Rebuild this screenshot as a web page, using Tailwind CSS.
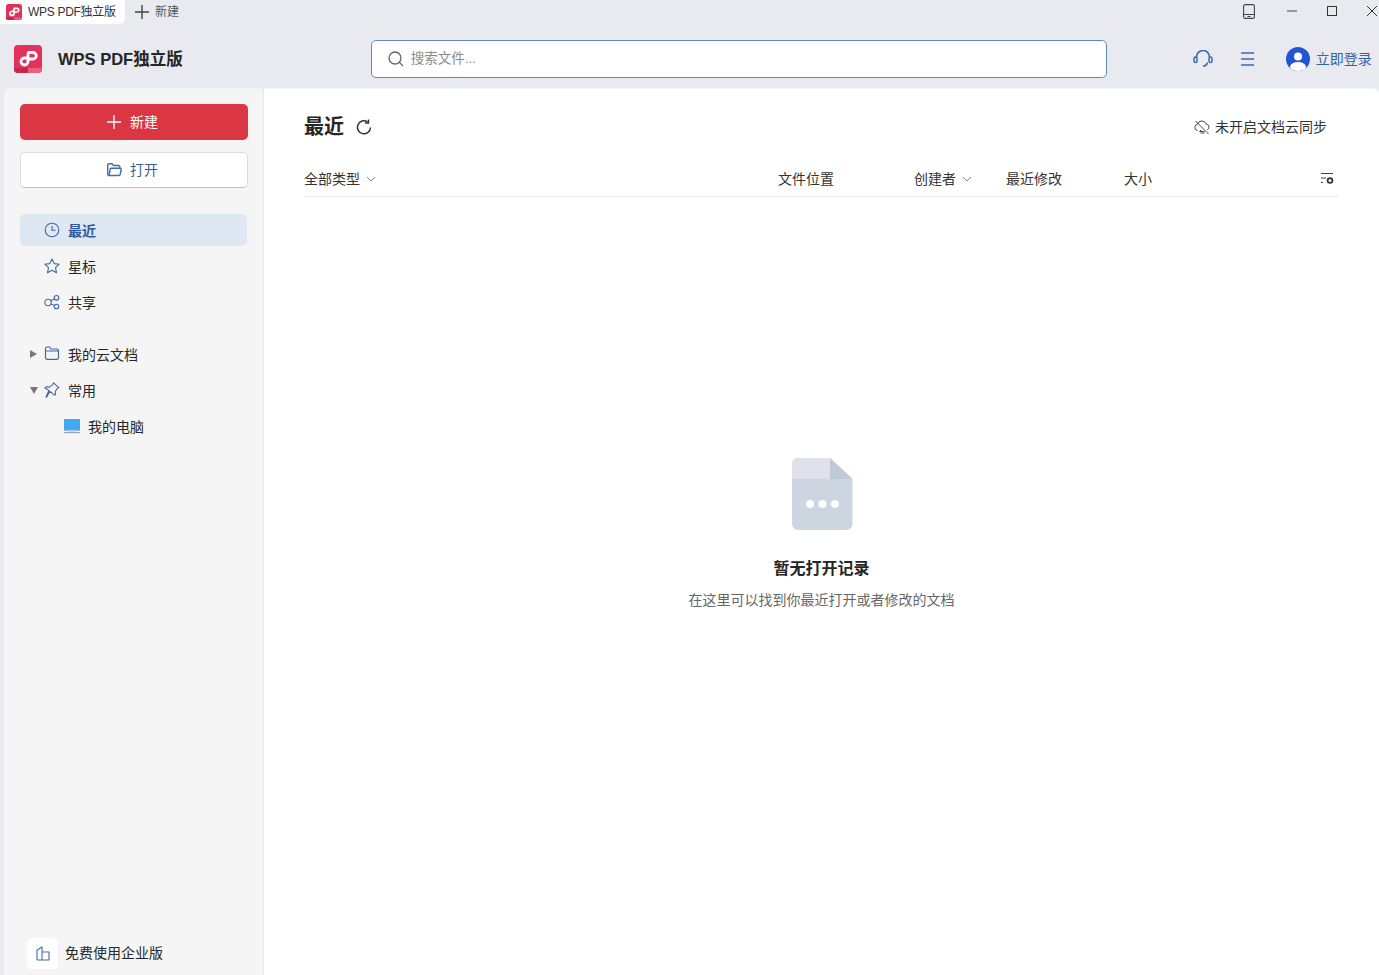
<!DOCTYPE html>
<html lang="zh-CN">
  <head>
    <meta charset="UTF-8" />
    <title>WPS PDF独立版</title>
    <script src="https://cdn.jsdelivr.net/npm/@tailwindcss/browser@4"></script>
  </head>
  <body class="bg-[#e9eaef] overflow-hidden font-['Liberation_Sans','Noto_Sans_CJK_SC',sans-serif] text-[#262626]">
    <div class="h-[975px] w-[1379px] flex flex-col overflow-hidden">
      <!-- title bar -->
      <div class="h-[26px] flex items-start shrink-0">
        <div class="h-[26px] w-[125px] bg-white rounded-br-md flex items-center pl-[6px] gap-[6px] -mt-[2px] pt-[2px]">
          <svg width="16" height="16" viewBox="0 0 28 28"><rect width="28" height="28" rx="4" fill="#e0325a"/><path d="M0 23h14v5H4a4 4 0 0 1-4-4z" fill="#c4264c"/><path d="M14 23h14v1a4 4 0 0 1-4 4H14z" fill="#ea5f7e"/><path d="M14.500 7.500h4.500a3.200 3.200 0 0 1 0 6.500H14v-4.500a2.500 2.500 0 0 1 .5-2zM14 14v2.500a3.500 3.500 0 1 1-3.500-3.500H14" fill="none" stroke="#fff" stroke-width="3"/></svg>
          <span class="text-[12px] tracking-[-0.3px] text-[#333]">WPS PDF独立版</span>
        </div>
        <div class="flex items-center h-[24px] ml-[10px] gap-[6px]">
          <svg width="14" height="14" viewBox="0 0 14 14"><path d="M7 0v14M0 7h14" stroke="#444" stroke-width="1.400"/></svg>
          <span class="text-[12px] text-[#555]">新建</span>
        </div>
        <div class="ml-auto flex items-center h-[22px]">
          <svg class="mr-[32px]" width="12" height="15" viewBox="0 0 12 15" fill="none"><rect x=".6" y=".6" width="10.800" height="13.800" rx="1.500" stroke="#444" stroke-width="1.100"/><path d="M.6 10.500h10.800M4.500 12.500h3" stroke="#444"/></svg>
          <svg class="mr-[30px]" width="10" height="10" viewBox="0 0 10 10"><path d="M0 5h10" stroke="#444"/></svg>
          <svg class="mr-[30px]" width="10" height="10" viewBox="0 0 10 10" fill="none"><rect x=".5" y=".5" width="9" height="9" stroke="#333"/></svg>
          <svg class="mr-[2px]" width="10" height="10" viewBox="0 0 10 10"><path d="M0 0l10 10M10 0L0 10" stroke="#333"/></svg>
        </div>
      </div>
      <!-- header -->
      <div class="h-[62px] flex items-center shrink-0 relative">
        <svg class="ml-[14px] mt-[4px]" width="28" height="28" viewBox="0 0 28 28"><rect width="28" height="28" rx="4" fill="#e0325a"/><path d="M0 23h14v5H4a4 4 0 0 1-4-4z" fill="#c4264c"/><path d="M14 23h14v1a4 4 0 0 1-4 4H14z" fill="#ea5f7e"/><path d="M14.500 7.500h4.500a3.200 3.200 0 0 1 0 6.500H14v-4.500a2.500 2.500 0 0 1 .5-2zM14 14v2.500a3.500 3.500 0 1 1-3.500-3.500H14" fill="none" stroke="#fff" stroke-width="2.800"/></svg>
        <span class="ml-[16px] mt-[4px] text-[16.500px] font-bold text-[#262626]">WPS PDF独立版</span>
        <div class="ml-[188px] mt-[4px] w-[736px] h-[38px] bg-white border border-[#5f8bbd] rounded-[5px] flex items-center pl-[16px] gap-[7px]">
          <svg width="16" height="16" viewBox="0 0 16 16" fill="none"><circle cx="7" cy="7" r="6" stroke="#666" stroke-width="1.300"/><path d="M11.500 11.500L15 15" stroke="#666" stroke-width="1.300"/></svg>
          <span class="text-[13.500px] text-[#8a8a8a]">搜索文件...</span>
        </div>
        <svg class="ml-[86px] mt-[4px]" width="20" height="18" viewBox="0 0 20 18" fill="none"><path d="M3.500 7.500V7a6.500 6.500 0 0 1 13 0v.5" stroke="#3a69b0" stroke-width="1.600"/><path d="M14.500 12.500c-.5 2.500-2 3.500-4.500 3.500" stroke="#3a69b0" stroke-width="1.600"/><rect x="1" y="7" width="3" height="5.500" rx="1.500" stroke="#3a69b0" stroke-width="1.500"/><rect x="16" y="7" width="3" height="5.500" rx="1.500" stroke="#3a69b0" stroke-width="1.500"/></svg>
        <svg class="ml-[28px] mt-[4px]" width="13" height="14" viewBox="0 0 13 14"><path d="M0 1h13M0 7h13M0 13h13" stroke="#3a69b0" stroke-width="1.500"/></svg>
        <svg class="ml-[32px] mt-[4px]" width="24" height="24" viewBox="0 0 24 24"><defs><clipPath id="avatar"><circle cx="12" cy="12" r="12"/></clipPath></defs><circle cx="12" cy="12" r="12" fill="#1f55d6"/><g clip-path="url(#avatar)"><circle cx="12" cy="9.500" r="4" fill="#fff"/><ellipse cx="12" cy="20" rx="8" ry="5" fill="#fff"/></g></svg>
        <span class="ml-[6px] mt-[4px] text-[14px] text-[#2f62ae]">立即登录</span>
      </div>
      <!-- body -->
      <div class="flex-1 flex min-h-0 pl-[4px]">
        <aside class="w-[260px] shrink-0 bg-[#f5f5f6] rounded-tl-md border-t border-r border-r-[#e8e8ea] border-t-[#f1f1f3] flex flex-col pl-[16px] pr-[15px] pt-[15px] pb-[6px]">
          <div class="h-[36px] bg-[#da3644] rounded-[5px] flex items-center justify-center gap-[9px] pr-[3px] text-white">
            <svg width="14" height="14" viewBox="0 0 14 14"><path d="M7 0v14M0 7h14" stroke="#fff" stroke-width="1.300"/></svg>
            <span class="text-[14px]">新建</span>
          </div>
          <div class="mt-[12px] h-[36px] bg-white border border-[#dcdcdc] border-b-[#bdbdbd] rounded-[5px] flex items-center justify-center gap-[8px] pr-[3px]">
            <svg width="15" height="14" viewBox="0 0 15 14" fill="none" stroke="#3f6fa8" stroke-width="1.400"><path d="M2 12.500a1.300 1.300 0 0 1-1.300-1.300V2a1.300 1.300 0 0 1 1.300-1.300h3l1.500 1.800h5a1.300 1.300 0 0 1 1.300 1.300v1.400"/><path d="M2 12.500l1.200-6.500a1 1 0 0 1 1-.7h9a1 1 0 0 1 1 1.200l-1 4.800a1.500 1.500 0 0 1-1.500 1.200H2z"/></svg>
            <span class="text-[14px] text-[#3a5f8f]">打开</span>
          </div>
          <nav class="mt-[26px] flex flex-col w-[227px]">
            <div class="h-[32px] bg-[#dfe7f3] rounded-[5px] flex items-center pl-[24px] gap-[8px]">
              <svg width="16" height="16" viewBox="0 0 16 16" fill="none" stroke="#45689b" stroke-width="1.100"><circle cx="8" cy="8" r="6.800"/><path d="M8 4v4.300h3.500"/></svg>
              <span class="text-[14px] font-bold text-[#2f5a9c] mt-[2px]">最近</span>
            </div>
            <div class="mt-[4px] h-[32px] flex items-center pl-[24px] gap-[8px]">
              <svg width="16" height="16" viewBox="0 0 16 16" fill="none" stroke="#45689b" stroke-width="1.100"><path d="M8 .9l2.200 4.700 5 .6-3.700 3.500 1 5.100L8 12.300l-4.500 2.500 1-5.100L.8 6.200l5-.6z" stroke-linejoin="round"/></svg>
              <span class="text-[14px] mt-[2px]">星标</span>
            </div>
            <div class="mt-[4px] h-[32px] flex items-center pl-[24px] gap-[8px]">
              <svg width="16" height="16" viewBox="0 0 16 16" fill="none" stroke="#45689b" stroke-width="1.100"><circle cx="4" cy="8.500" r="3.200"/><circle cx="12.500" cy="3.800" r="2.300"/><circle cx="12.500" cy="12.500" r="2.300"/><path d="M6.800 7l3.700-2.200M6.800 10l3.700 1.500"/></svg>
              <span class="text-[14px] mt-[2px]">共享</span>
            </div>
            <div class="mt-[20px] h-[32px] flex items-center relative pl-[24px] gap-[8px]">
              <span class="absolute left-[10px] top-[12px] w-0 h-0 border-y-[4px] border-y-transparent border-l-[7px] border-l-[#777]"></span>
              <svg class="-mt-[2px]" width="16" height="14" viewBox="0 0 16 14" fill="none" stroke="#45689b" stroke-width="1.200"><path d="M1.500 4.500V2.500A1.500 1.500 0 0 1 3 1h2.500L7 3h6A1.800 1.800 0 0 1 14.500 4.800v6.700a1.800 1.800 0 0 1-1.800 1.800H3.300a1.800 1.800 0 0 1-1.800-1.800zM1.500 5h13"/></svg>
              <span class="text-[14px] mt-[2px]">我的云文档</span>
            </div>
            <div class="mt-[4px] h-[32px] flex items-center relative pl-[24px] gap-[8px]">
              <span class="absolute left-[10px] top-[13px] w-0 h-0 border-x-[4px] border-x-transparent border-t-[7px] border-t-[#777]"></span>
              <svg width="16" height="16" viewBox="0 0 16 16" fill="none" stroke="#45689b" stroke-width="1.100"><path d="M9.500 .8l5.500 5-1.700.5-2 3.200.2 3-1 .7L6 9.300 2.500 15.200 2 14.800 5 8.500 1 6l1.500-1.200 3 .3 3.200-2.500z" stroke-linejoin="round"/></svg>
              <span class="text-[14px] mt-[2px]">常用</span>
            </div>
            <div class="mt-[4px] h-[32px] flex items-center pl-[44px] gap-[8px]">
              <svg width="16" height="15" viewBox="0 0 16 15"><rect width="16" height="10.500" fill="#41a9ee"/><rect y="10.500" width="16" height="1" fill="#2b80c9"/><rect y="13" width="16" height="1.200" fill="#9aa9b8"/><rect x="5" y="11.500" width="6" height="1.500" fill="#cfd6dd"/></svg>
              <span class="text-[14px] mt-[2px]">我的电脑</span>
            </div>
          </nav>
          <div class="mt-auto flex items-center gap-[7px] pl-[7px]">
            <div class="w-[31px] h-[31px] bg-white rounded-[5px] flex items-center justify-center">
              <svg width="14" height="15" viewBox="0 0 14 15" fill="none" stroke="#3f6fa8" stroke-width="1.100"><path d="M1 14V4l5-3v13M6 6h7v8H1M1 14h12"/></svg>
            </div>
            <span class="text-[14px]">免费使用企业版</span>
          </div>
        </aside>
        <main class="flex-1 bg-white rounded-tr-md border-t border-[#f4f4f6] pt-[23px] pl-[40px] pr-[40px] flex flex-col relative">
          <div class="h-[30px] flex items-center">
            <h1 class="text-[20px] font-bold text-[#262626]">最近</h1>
            <svg class="ml-[12px]" width="16" height="16" viewBox="0 0 16 16" fill="none" stroke="#333" stroke-width="1.500"><path d="M14.500 8.500A6.500 6.500 0 1 1 11.500 2.800"/><path d="M12.500 .5V4H9"/></svg>
            <svg class="ml-auto" width="16" height="15" viewBox="0 0 16 15" fill="none" stroke="#444" stroke-width="1"><path d="M3.500 10.500a3.200 3.200 0 0 1 0-6.300 4.500 4.500 0 0 1 8.500-.4 3.300 3.300 0 0 1 1.500 6"/><path d="M1.500 1l13 13"/><path d="M5.500 11.500h5M5.500 11.500l1.500-1.500M10.500 13h-4"/></svg>
            <span class="ml-[5px] mr-[12px] text-[14px] text-[#333]">未开启文档云同步</span>
          </div>
          <div class="mt-[18px] h-[37px] border-b border-[#e9e9e9] flex items-center text-[14px] text-[#333] pt-[2px]">
            <div class="w-[474px] flex items-center gap-[6px]">全部类型
              <svg width="10" height="6" viewBox="0 0 10 6" fill="none"><path d="M1 1l4 4 4-4" stroke="#888"/></svg>
            </div>
            <div class="w-[136px]">文件位置</div>
            <div class="w-[92px] flex items-center gap-[6px]">创建者
              <svg width="10" height="6" viewBox="0 0 10 6" fill="none"><path d="M1 1l4 4 4-4" stroke="#888"/></svg>
            </div>
            <div class="w-[118px]">最近修改</div>
            <div>大小</div>
            <svg class="ml-auto mr-[5px] -mt-[2px]" width="14" height="13" viewBox="0 0 14 13" fill="none"><path d="M1 1.500h12M1 6h5M1 10.500h2" stroke="#444"/><circle cx="10" cy="8.500" r="2.400" stroke="#333" stroke-width="1.800"/></svg>
          </div>
          <div class="absolute top-[369px] left-[40px] right-[40px] flex flex-col items-center">
            <svg class="ml-[1px]" width="61" height="72" viewBox="0 0 61 72"><path d="M6 0H38L60.500 21V66a6 6 0 0 1-6 6H6a6 6 0 0 1-6-6V6a6 6 0 0 1 6-6z" fill="#cdd5e0"/><path d="M6 0H38V21H0V6a6 6 0 0 1 6-6z" fill="#dfe2ea"/><path d="M38 0L60.500 21H38z" fill="#bfc9d8"/><circle cx="18" cy="46" r="4" fill="#fff"/><circle cx="30.500" cy="46" r="4" fill="#fff"/><circle cx="43" cy="46" r="4" fill="#fff"/></svg>
            <h2 class="mt-[27px] text-[16px] leading-[24px] font-bold text-[#262626]">暂无打开记录</h2>
            <p class="mt-[9px] text-[14px] leading-[20px] text-[#666]">在这里可以找到你最近打开或者修改的文档</p>
          </div>
        </main>
      </div>
    </div>
  </body>
</html>
